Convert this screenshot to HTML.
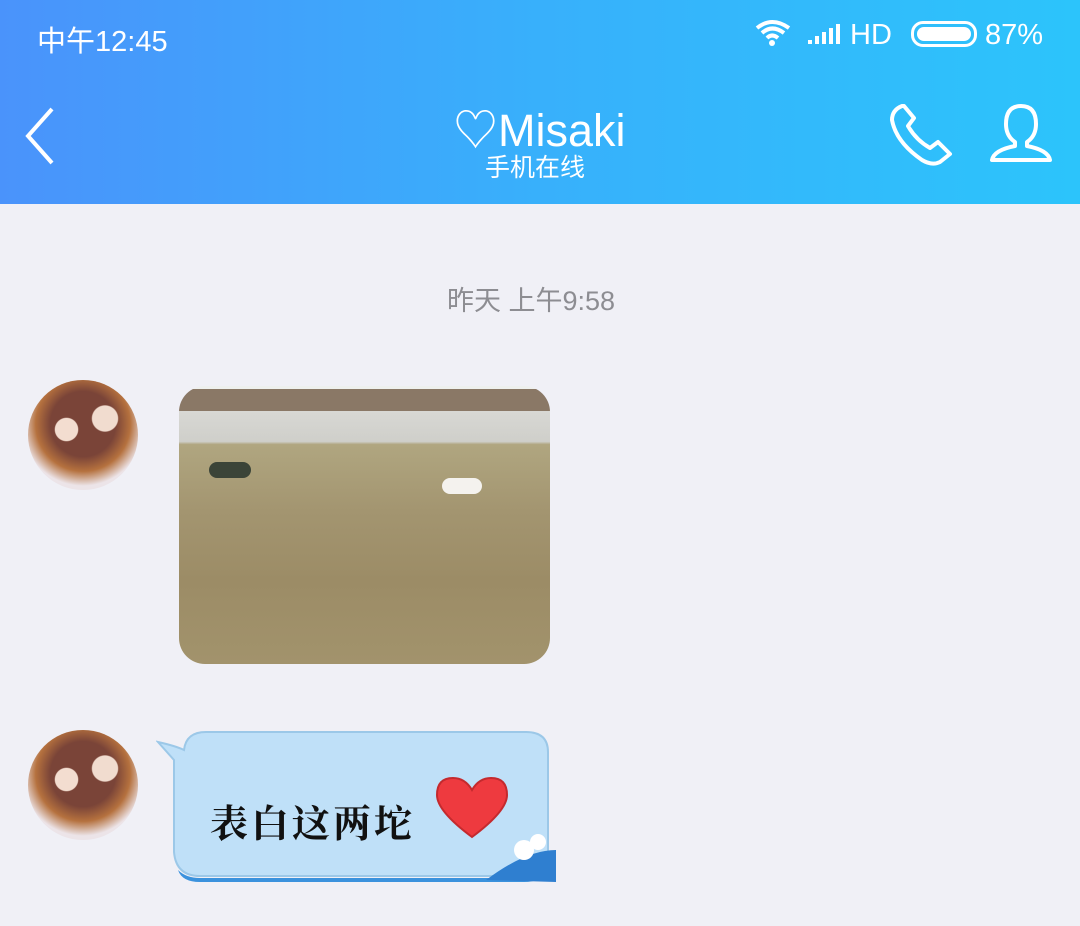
<!DOCTYPE html>
<html><head><meta charset="utf-8"><style>
body{margin:0;width:1080px;height:926px;background:#f0f0f6;position:relative;overflow:hidden;font-family:"Liberation Sans","Noto Sans CJK SC",sans-serif}
.hdr{position:absolute;left:0;top:0;width:1080px;height:204px;background:linear-gradient(90deg,#4a93fb,#38b0fb 50%,#2cc4fb);color:#fff}
.t{position:absolute;white-space:nowrap}
.av{position:absolute;width:110px;height:110px;border-radius:55px;background:radial-gradient(circle at 70% 35%,#f1dccf 0 12%,transparent 13%),radial-gradient(circle at 35% 45%,#f3ddd0 0 12%,transparent 13%),radial-gradient(circle at 50% 40%,#7a4438 0 38%,#b5713e 55%,#ece4e8 72%)}
</style></head><body>
<div class="hdr">
<div class="t" style="left:37px;top:18px;font-size:29px">中午12:45</div>
<div class="t" style="left:850px;top:19px;font-size:29px">HD</div>
<svg style="position:absolute;left:754px;top:18px" width="40" height="30"><path d="M3 10Q18-2 35 10M8 15Q18 6 30 15M13 20Q18 15 24 20" stroke="#fff" stroke-width="4" fill="none"/><circle cx="18" cy="25" r="3" fill="#fff"/></svg>
<svg style="position:absolute;left:806px;top:22px" width="36" height="24"><path d="M2 22h4v-4h-4zM9 22h4v-8h-4zM16 22h4v-12h-4zM23 22h4v-16h-4zM30 22h4v-20h-4z" fill="#fff"/></svg>
<div style="position:absolute;left:911px;top:21px;width:60px;height:20px;border:3px solid #fff;border-radius:12px"><div style="margin:3px;height:14px;border-radius:7px;background:#fff"></div></div>
<div class="t" style="left:985px;top:19px;font-size:29px">87%</div>
<svg style="position:absolute;left:20px;top:105px" width="40" height="62"><path d="M32 4L8 31L32 58" stroke="#fff" stroke-width="4" fill="none"/></svg>
<div class="t" style="left:453px;top:94px;font-size:45px">♡Misaki</div>
<div class="t" style="left:485px;top:148px;font-size:25px">手机在线</div>
<svg style="position:absolute;left:888px;top:102px" width="70" height="66"><path d="M14 4Q4 8 4 18Q8 40 34 58Q44 64 52 60L62 52L50 40L42 46Q28 38 20 24L26 16L16 4Z" stroke="#fff" stroke-width="4" fill="none" stroke-linejoin="round"/></svg>
<svg style="position:absolute;left:988px;top:102px" width="66" height="62"><path d="M33 4Q18 4 18 22Q18 34 27 40L27 44Q6 48 4 58L62 58Q60 48 39 44L39 40Q48 34 48 22Q48 4 33 4Z" stroke="#fff" stroke-width="4" fill="none" stroke-linejoin="round"/></svg>
</div>
<div class="t" style="left:447px;top:279px;font-size:27px;color:#8d8d92">昨天 上午9:58</div>
<div class="av" style="left:28px;top:380px"></div>
<div style="position:absolute;left:179px;top:386px;width:371px;height:278px;border-radius:26px;overflow:hidden;background:linear-gradient(#eef0ee 0,#eef0ee 1%,#8a7866 1%,#8a7866 9%,#d8d8d4 9%,#cfcfca 20%,#b0a680 21%,#a39570 45%,#9c8c66 70%,#a2936c 100%)">
<div style="position:absolute;left:30px;top:76px;width:42px;height:16px;border-radius:8px;background:#3b4438"></div>
<div style="position:absolute;left:263px;top:92px;width:40px;height:16px;border-radius:8px;background:#f4f2ee"></div>
</div>
<div class="av" style="left:28px;top:730px"></div>
<svg style="position:absolute;left:156px;top:730px" width="404" height="154"><path d="M2 12Q20 16 28 20Q30 2 50 2L370 2Q392 2 392 22L392 122Q392 146 368 146L44 146Q20 146 18 122L18 30Z" fill="#bfe0f8" stroke="#9cc8e8" stroke-width="2"/><path d="M22 140Q30 148 44 148L368 148Q385 148 392 138L392 142Q385 152 368 152L44 152Q26 152 22 140Z" fill="#3b92dd"/><path d="M330 150Q370 120 400 120L400 152Z" fill="#2f7fd0"/><circle cx="368" cy="120" r="10" fill="#fff"/><circle cx="382" cy="112" r="8" fill="#fff"/></svg>
<div class="t" style="left:210px;top:793px;font-size:38px;color:#111;letter-spacing:3px;font-weight:bold;font-family:'Liberation Serif','Noto Serif CJK SC',serif">表白这两坨</div>
<svg style="position:absolute;left:433px;top:775px" width="78" height="64"><path d="M39 62Q4 36 4 20Q4 3 20 3Q32 3 39 15Q46 3 58 3Q74 3 74 20Q74 36 39 62Z" fill="#ee3a3f" stroke="#c42a2e" stroke-width="2"/></svg>
</body></html>
